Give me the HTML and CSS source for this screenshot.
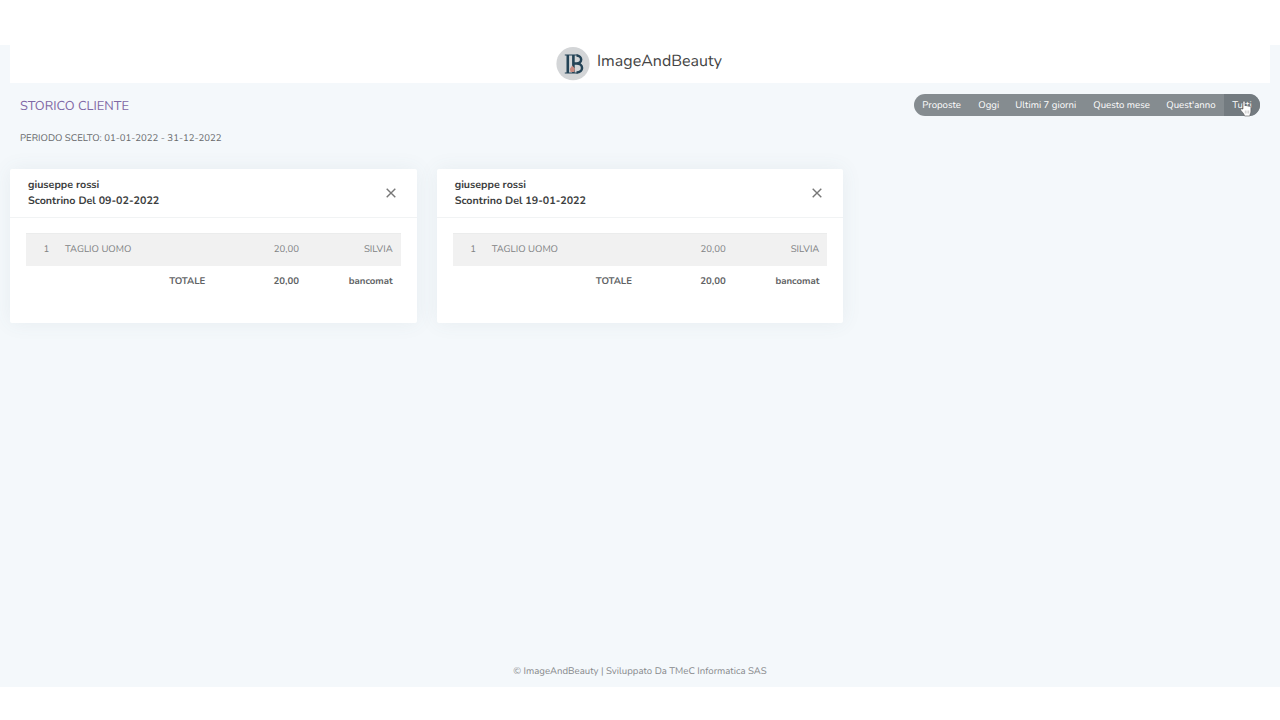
FILE: index.html
```html
<!DOCTYPE html>
<html lang="it">
<head>
  <meta charset="utf-8">
  <title>ImageAndBeauty - Storico cliente</title>
  <link rel="stylesheet" href="styles.css">
</head>
<body>
<div class="wrapper">
  <header class="topbar">
    <svg class="logo" width="34" height="34" viewBox="0 0 34 34">
      <circle cx="17" cy="16.700" r="16.600" fill="#d3d5d7"/>
      <g fill="none" stroke="#234356">
        <path stroke-width="2.600" d="M11.800 8v18M17.400 8v18"/>
        <path stroke-width="1.200" d="M8.800 8h13M8.800 26h13"/>
        <path stroke-width="2.500" d="M20.500 8.600c6.200 0 6.200 8 0 8h-3M20.500 16.600c7.400 0 7.400 8.800 0 8.800"/>
      </g>
      <path d="M13.800 22l2.400-3.500 2.700 3-.6 3.500h-3.700z" fill="#c98a80"/>
    </svg>
    <h1>ImageAndBeauty</h1>
  </header>

  <div class="page-titles">
    <div>
      <h3>STORICO CLIENTE</h3>
      <p class="periodo">PERIODO SCELTO: 01-01-2022 - 31-12-2022</p>
    </div>
    <nav class="btn-group">
      <a class="btn b1">Proposte</a>
      <a class="btn b2">Oggi</a>
      <a class="btn b3">Ultimi 7 giorni</a>
      <a class="btn b4">Questo mese</a>
      <a class="btn b5">Quest'anno</a>
      <a class="btn b6 active">Tutti
        <svg class="cursor" width="12" height="17" viewBox="0 0 12 17">
          <path d="M3 9V2.2c0-1.6 2-1.6 2 0V6c.3-.9 1.800-.8 2 .2.400-.8 1.800-.6 1.900.4.500-.7 2-.4 2 .8v3.800c0 2-.9 2.500-1.100 4.800H4.600C4 13.500 2 12 .8 10.300c-.7-1.200.7-2 1.500-1.300z" fill="#fff" stroke="#555" stroke-width=".6"/>
          <path d="M5.300 10.500v3M7 10.500v3M8.700 10.500v3" stroke="#999" stroke-width=".5"/>
        </svg>
      </a>
    </nav>
  </div>

  <main class="row">
    <section class="card">
      <div class="card-header">
        <div class="card-title"><span class="nome">giuseppe rossi</span><br>Scontrino Del 09-02-2022</div>
        <svg class="close" width="10" height="10" viewBox="0 0 10 10"><path d="M.7.7l8.600 8.600M9.300.7L.7 9.300"/></svg>
      </div>
      <table>
        <tr class="riga"><td class="qta">1</td><td class="desc">TAGLIO UOMO</td><td class="num">20,00</td><td class="op">SILVIA</td></tr>
        <tr class="totale"><td></td><td class="lbl">TOTALE</td><td class="num">20,00</td><td class="pag">bancomat</td></tr>
      </table>
    </section>

    <section class="card">
      <div class="card-header">
        <div class="card-title"><span class="nome">giuseppe rossi</span><br>Scontrino Del 19-01-2022</div>
        <svg class="close" width="10" height="10" viewBox="0 0 10 10"><path d="M.7.7l8.600 8.600M9.300.7L.7 9.300"/></svg>
      </div>
      <table>
        <tr class="riga"><td class="qta">1</td><td class="desc">TAGLIO UOMO</td><td class="num">20,00</td><td class="op">SILVIA</td></tr>
        <tr class="totale"><td></td><td class="lbl">TOTALE</td><td class="num">20,00</td><td class="pag">bancomat</td></tr>
      </table>
    </section>
  </main>

  <footer>© ImageAndBeauty | Sviluppato Da TMeC Informatica SAS</footer>
</div>
</body>
</html>
```

FILE: styles.css
```css
* { box-sizing: border-box; }

body {
  margin: 0;
  padding-top: 45px;
  background: #fff;
  color: #67696b;
  font-family: Nunito, Lato, sans-serif;
  font-size: 9.6px;
  text-rendering: geometricPrecision;
}

.wrapper {
  display: flex;
  flex-direction: column;
  height: 642px;
  padding: 0 10px;
  background: #f4f8fb;
}

.topbar {
  display: flex;
  justify-content: center;
  height: 38px;
  background: #fff;
}
.logo { margin: 2px 7px 0 0; }
.topbar h1 {
  margin: 5px 0 0;
  width: 127px;
  font-size: 16px;
  line-height: 22px;
  font-weight: 400;
  color: #444;
  white-space: nowrap;
}

.page-titles {
  display: flex;
  justify-content: space-between;
  height: 86px;
  padding: 11px 10px 0;
}
h3 {
  margin: 3px 0 0;
  font-size: 12.8px;
  line-height: 18px;
  font-weight: 400;
  color: #7f67a5;
}
.periodo {
  margin: 17px 0 0;
  line-height: 14px;
  color: #67696b;
}

.btn-group {
  display: flex;
  height: 22px;
  border-radius: 11px;
  background: #858c90;
}
.btn {
  position: relative;
  padding-left: 8.3px;
  line-height: 23px;
  color: #fff;
  white-space: nowrap;
}
.b1 { width: 56px; }
.b2 { width: 37px; }
.b3 { width: 78px; }
.b4 { width: 73px; }
.b5 { width: 66px; }
.b6 { width: 36px; }
.btn.active {
  background: #737b80;
  border-radius: 0 11px 11px 0;
}
.cursor {
  position: absolute;
  left: 16px;
  top: 6px;
}

.row {
  display: flex;
  gap: 20px;
}
.card {
  width: 406.7px;
  height: 154px;
  background: #fff;
  border-radius: 2px;
  box-shadow: 0 0 20px rgba(80, 100, 110, .08);
}
.card-header {
  display: flex;
  justify-content: space-between;
  height: 49px;
  padding: 8px 21px 0 18px;
  border-bottom: 1px solid #f1f3f4;
}
.card-title {
  font-size: 10.7px;
  line-height: 16px;
  font-weight: 700;
  color: #3c3e40;
}
.close {
  margin-top: 11px;
  fill: none;
  stroke: #777;
  stroke-width: 1.4;
}

table {
  width: 374.7px;
  margin: 15px 16px 0;
  border-collapse: separate;
  border-spacing: 0;
  table-layout: fixed;
}
td { height: 31px; padding: 0; }
.riga { background: #f1f1f1; color: #808284; }
.riga td { height: 33px; border-top: 1px solid #ebecec; padding-bottom: 2px; }
.totale { font-weight: 700; color: #606264; }
.totale td { padding-bottom: 1px; }
.riga .qta { width: 39px; padding-left: 17.6px; }
.desc { width: 141px; }
.num { width: 93px; text-align: right; }
.op, .pag { padding-right: 8px; text-align: right; }
.lbl { padding-right: .7px; text-align: right; }

footer {
  margin-top: auto;
  padding-bottom: 8px;
  line-height: 14px;
  text-align: center;
  color: #87898b;
}
```
